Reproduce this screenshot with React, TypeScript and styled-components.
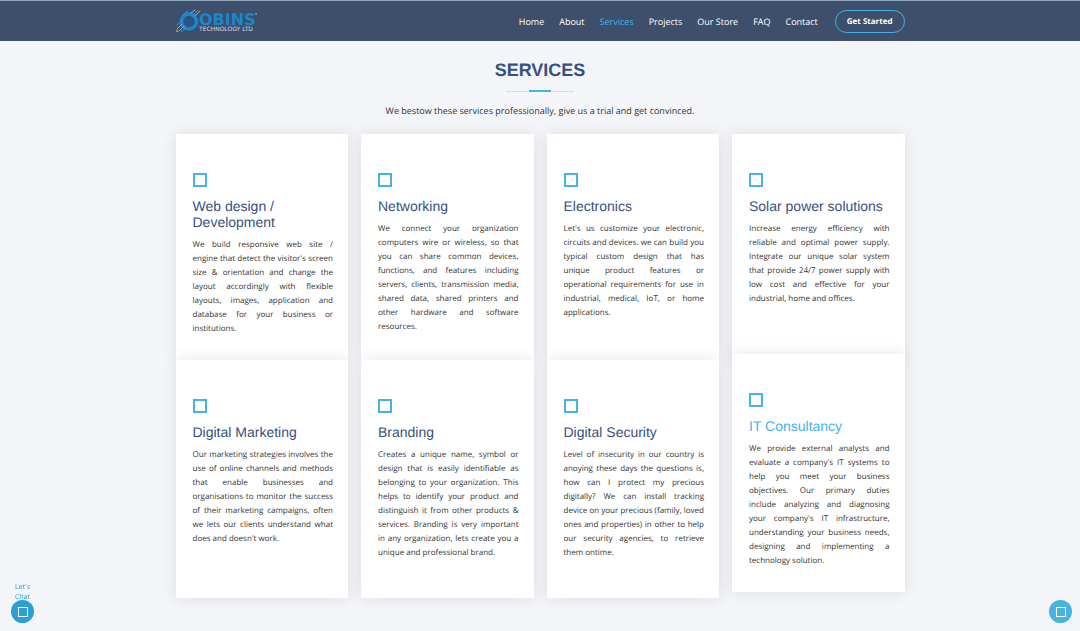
import React from "react";
import styled, { createGlobalStyle } from "styled-components";

const GlobalStyle = createGlobalStyle`
  *, *::before, *::after { box-sizing: border-box; }
  body {
    margin: 0;
    background: #f3f5f9;
    color: #333333;
    font-family: "Open Sans", sans-serif;
    font-size: 9px;
    text-rendering: geometricPrecision;
  }
  a { text-decoration: none; }
`;

const Container = styled.div`
  width: 100%;
  max-width: 729px;
  margin: 0 auto;
`;

const Header = styled.header`
  background: #3e4f6c;
  border-top: 1px solid #8ba5bd;
  padding: 8px 0 7px;
`;

const Bar = styled(Container)`
  display: flex;
  align-items: center;
  justify-content: space-between;
`;

const LogoLink = styled.a`
  display: block;
  height: 25px;
`;

const Nav = styled.nav`
  display: flex;
  align-items: center;
  gap: 15px;
`;

const NavLink = styled.a<{ $active?: boolean }>`
  color: ${(p) => (p.$active ? "#47b2e4" : "#ffffff")};
  line-height: 16px;
`;

const GetStarted = styled.a`
  color: #ffffff;
  font-weight: 700;
  font-size: 8px;
  line-height: 21px;
  margin-left: 2px;
  padding: 0 11px;
  border: 1px solid #47b2e4;
  border-radius: 12px;
`;

const Section = styled.section`
  padding: 18px 0 32px;
`;

const Heading = styled.h2`
  margin: 0;
  color: #37517e;
  font-family: "Liberation Sans", sans-serif;
  font-size: 18px;
  line-height: 22px;
  font-weight: 700;
  text-align: center;
`;

const Divider = styled.div`
  display: flex;
  justify-content: center;
  align-items: center;
  width: 68px;
  height: 2px;
  margin: 9px auto 11px;
  background: linear-gradient(#dddddd, #dddddd) center bottom / 100% 1px no-repeat;

  &::after {
    content: "";
    width: 22px;
    height: 2px;
    background: #47b2e4;
  }
`;

const Lead = styled.p`
  margin: 0 0 16px;
  line-height: 15px;
  text-align: center;
`;

const Grid = styled.div`
  display: grid;
  grid-template-columns: repeat(4, 1fr);
  column-gap: 13px;
`;

const Card = styled.article<{ $lifted?: boolean }>`
  display: flex;
  flex-direction: column;
  align-items: stretch;
  padding: 39px 15px 24px 17px;
  background: #ffffff;
  box-shadow: 0 0 14px rgba(0, 0, 0, 0.1);
  transform: translateY(${(p) => (p.$lifted ? "-6px" : "0")});

  h3 a { color: ${(p) => (p.$lifted ? "#47b2e4" : "#37517e")}; }
`;

const Square = styled.span<{ $small?: boolean }>`
  width: ${(p) => (p.$small ? "10px" : "14px")};
  height: ${(p) => (p.$small ? "10px" : "14px")};
  border: ${(p) => (p.$small ? "1px solid #ffffff" : "2px solid #47b2e4")};
`;

const CardTitle = styled.h3`
  margin: 11px 0 8px;
  font-family: "Liberation Sans", sans-serif;
  font-size: 14px;
  line-height: 16px;
  font-weight: 400;
`;

const CardText = styled.p`
  margin: 0;
  font-size: 8px;
  line-height: 14px;
  text-align: justify;
`;

const Chat = styled.a`
  position: fixed;
  left: 11px;
  bottom: 8px;
  width: 23px;
  display: flex;
  flex-direction: column;
  align-items: center;
  color: #2a9fd6;
  font-size: 7px;
  line-height: 10px;
  text-align: center;
`;

const ChatLabel = styled.span`
  margin-bottom: -3px;
`;

const Round = styled.span<{ $color: string }>`
  display: flex;
  align-items: center;
  justify-content: center;
  width: 23px;
  height: 23px;
  border-radius: 50%;
  background: ${(p) => p.$color};
`;

const BackToTop = styled.a`
  position: fixed;
  right: 8px;
  bottom: 8px;
`;

const Logo = () => (
  <svg width="84" height="25" viewBox="0 0 84 25" role="img" aria-label="Qobins Technology Ltd">
    <g fill="none" strokeLinecap="round">
      <circle cx="13" cy="12.5" r="7.5" stroke="#1a86cd" strokeWidth="3.5" />
      <circle cx="13" cy="12.5" r="4" fill="#24558d" stroke="none" />
      <path d="M1 20 6 15M3 22 8 17M15 4 19 1M19 7 24 2" stroke="#8fb6d0" />
      <path d="M1 16 6 11M5 23 10 19M6 7 12 2M17 6 22 1" stroke="#2b9bdc" />
    </g>
    <circle cx="1" cy="22" r="1" fill="#8bbf5a" />
    <text x="23" y="16" fill="#1a86cd" fontFamily="DejaVu Sans, sans-serif" fontWeight="700" fontSize="16">OBINS</text>
    <text x="23" y="22" fill="#d3dce6" fontFamily="DejaVu Sans, sans-serif" fontSize="6">TECHNOLOGY LTD</text>
    <circle cx="80" cy="5" r="1" fill="#6fa3c8" />
  </svg>
);

const links = ["Home", "About", "Services", "Projects", "Our Store", "FAQ", "Contact"];

const services = [
  { title: "Web design / Development", text: "We build responsive web site / engine\u00a0that detect the visitor's screen size & orientation and change the layout accordingly with flexible layouts, images, application and database for your business or institutions." },
  { title: "Networking", text: "We connect your organization computers wire or wireless, so that you can share common devices, functions, and features including servers, clients, transmission media, shared data, shared printers and other hardware and software resources." },
  { title: "Electronics", text: "Let's us customize your electronic, circuits and devices. we can build you typical custom design that has unique product features or operational requirements for use in industrial, medical, IoT, or home applications." },
  { title: "Solar power solutions", text: "Increase energy efficiency with reliable and optimal power supply. Integrate our unique solar system that provide 24/7 power supply with low cost and effective for your industrial, home and offices." },
  { title: "Digital Marketing", text: "Our marketing strategies involves the use of online channels and methods that enable businesses and organisations to monitor the success of their marketing campaigns, often we lets our clients understand what does and doesn't work." },
  { title: "Branding", text: "Creates a unique name, symbol or design that is easily identifiable as belonging to your organization. This helps to identify your product and distinguish it from other products & services. Branding is very important in any organization, lets create you a unique and professional brand." },
  { title: "Digital Security", text: "Level of insecurity in our country is anoying these days the questions is, how can I protect my precious digitally? We can install tracking device on your precious (family, loved ones and properties) in other to help our security agencies, to retrieve them ontime." },
  { title: "IT Consultancy", text: "We provide external analysts and evaluate a company's IT systems to help you meet your business objectives. Our primary duties include analyzing and diagnosing your company's IT infrastructure, understanding your business needs, designing and implementing a technology solution." },
];

export default function App() {
  const [lifted, setLifted] = React.useState("IT Consultancy");

  return (
    <>
      <GlobalStyle />
      <Header>
        <Bar>
          <LogoLink href="#home"><Logo /></LogoLink>
          <Nav>
            {links.map((l) => (
              <NavLink key={l} href={`#${l}`} $active={l === "Services"}>{l}</NavLink>
            ))}
            <GetStarted href="#start">Get Started</GetStarted>
          </Nav>
        </Bar>
      </Header>
      <main>
        <Section>
          <Container>
            <Heading>SERVICES</Heading>
            <Divider />
            <Lead>We bestow these services professionally, give us a trial and get convinced.</Lead>
            <Grid>
              {services.map((s) => (
                <Card key={s.title} $lifted={s.title === lifted} onMouseEnter={() => setLifted(s.title)}>
                  <Square />
                  <CardTitle><a href="#service">{s.title}</a></CardTitle>
                  <CardText>{s.text}</CardText>
                </Card>
              ))}
            </Grid>
          </Container>
        </Section>
      </main>
      <Chat href="#chat">
        <ChatLabel>Let's Chat</ChatLabel>
        <Round $color="#2a9fd6"><Square $small /></Round>
      </Chat>
      <BackToTop href="#top" aria-label="Back to top">
        <Round $color="#47b2e4"><Square $small /></Round>
      </BackToTop>
    </>
  );
}
